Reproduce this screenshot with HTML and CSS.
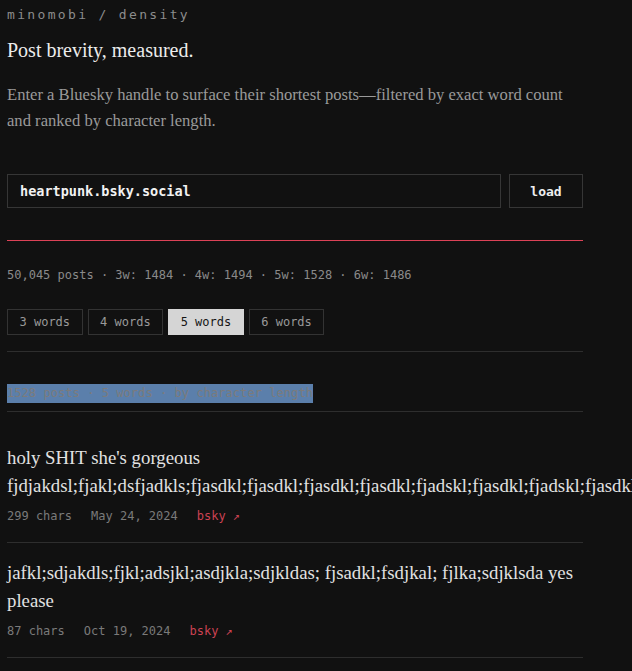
FILE: index.html
```html
<!DOCTYPE html>
<html>
<head>
<title>density</title>
<link rel="stylesheet" href="styles.css">
</head>
<body>

<div class="wrap">
  <div class="brand">minomobi / density</div>
  <h1 class="title">Post brevity, measured.</h1>
  <p class="lede">Enter a Bluesky handle to surface their shortest posts—filtered by exact word count and ranked by character length.</p>

  <form class="lookup" onsubmit="return false">
    <input class="handle" type="text" value="heartpunk.bsky.social">
    <button class="load" type="submit">load</button>
  </form>

  <div class="progress"><div class="progress-fill" style="width: 100%"></div></div>

  <div class="stats">50,045 posts · 3w: 1484 · 4w: 1494 · 5w: 1528 · 6w: 1486</div>

  <div class="tabs">
    <button class="tab">3 words</button>
    <button class="tab">4 words</button>
    <button class="tab active">5 words</button>
    <button class="tab">6 words</button>
  </div>

  <div class="summary"><span class="sel">1528 posts · 5 words · by character length</span></div>

  <div class="posts">
    <div class="post">
      <div class="post-text">holy SHIT she's gorgeous fjdjakdsl;fjakl;dsfjadkls;fjasdkl;fjasdkl;fjasdkl;fjasdkl;fjadskl;fjasdkl;fjadskl;fjasdkl;fjadskl;fjasdkl;fjasdkl;fjadskl;fjasdkl;fjadskl;fjasdkl;fjasdkl;fjadskl;fjasdkl;fjadskl;fjasdkl;fjasdkl;fjadskl;fjasdkl;fjadskl;fjasdkl;fjasdkl;fjadskl;fjasdkl;fjadskl;fjasdkl;fjasdkl</div>
      <div class="meta">
        <span>299 chars</span>
        <span>May 24, 2024</span>
        <a class="ext" href="#">bsky ↗</a>
      </div>
    </div>
    <div class="post">
      <div class="post-text">jafkl;sdjakdls;fjkl;adsjkl;asdjkla;sdjkldas; fjsadkl;fsdjkal; fjlka;sdjklsda yes please</div>
      <div class="meta">
        <span>87 chars</span>
        <span>Oct 19, 2024</span>
        <a class="ext" href="#">bsky ↗</a>
      </div>
    </div>
  </div>
</div>

</body>
</html>
```

FILE: styles.css
```css
html, body {
  overflow-x: hidden;
}

body {
  margin: 0;
  background-color: #111111;
  color: #e6e6e6;
  font-family: "Liberation Serif", serif;
}

.wrap {
  width: 576px;
  padding: 6px 7px 0;
}

.brand {
  font-family: "DejaVu Sans Mono", monospace;
  font-size: 13px;
  line-height: 18px;
  letter-spacing: 0.18em;
  color: #8c8c8c;
}

.title {
  margin: 12px 0 0;
  font-size: 20px;
  line-height: 28px;
  font-weight: normal;
  color: #ececec;
}

.lede {
  margin: 18px 0 0;
  font-size: 16.6px;
  line-height: 26px;
  color: #9a9a9a;
}

.lookup {
  display: flex;
  gap: 8px;
  margin-top: 40px;
}

.handle {
  flex-grow: 1;
  height: 34px;
  box-sizing: border-box;
  padding: 0 12px;
  background: #111111;
  border: 1px solid #363636;
  color: #f2f2f2;
  font-family: "DejaVu Sans Mono", monospace;
  font-size: 13.5px;
  font-weight: bold;
  outline: none;
}

.load {
  width: 74px;
  height: 34px;
  background: #111111;
  border: 1px solid #363636;
  color: #eeeeee;
  font-family: "DejaVu Sans Mono", monospace;
  font-size: 13px;
  font-weight: bold;
  cursor: pointer;
}

.progress {
  margin-top: 32px;
  height: 1px;
  background: #262626;
}

.progress-fill {
  height: 1px;
  background: #dc4257;
}

.stats {
  margin-top: 25px;
  font-family: "DejaVu Sans Mono", monospace;
  font-size: 12px;
  line-height: 18px;
  color: #8a8a8a;
}

.tabs {
  display: flex;
  gap: 5px;
  margin-top: 25px;
  padding-bottom: 16px;
  border-bottom: 1px solid #2e2e2e;
}

.tab {
  height: 26px;
  padding: 0 11.5px;
  background: #111111;
  border: 1px solid #333333;
  color: #999999;
  font-family: "DejaVu Sans Mono", monospace;
  font-size: 12px;
  cursor: pointer;
}

.tab.active {
  background: #d5d5d5;
  border-color: #d5d5d5;
  color: #151515;
}

.summary {
  padding: 32px 0 8px;
  border-bottom: 1px solid #2e2e2e;
  font-family: "DejaVu Sans Mono", monospace;
  font-size: 12px;
  line-height: 19px;
  height: 19px;
}

.sel {
  display: inline-block;
  background: #5b7fab;
  color: #7b7b7b;
  letter-spacing: 0.06px;
}

.posts {
  margin-top: 16px;
}

.post {
  padding: 16px 0 17px;
  border-bottom: 1px solid #2e2e2e;
}

.post-text {
  font-size: 18.8px;
  line-height: 28px;
  color: #e2e2e2;
}

.meta {
  display: flex;
  gap: 19px;
  margin-top: 7px;
  font-family: "DejaVu Sans Mono", monospace;
  font-size: 12px;
  line-height: 18px;
  color: #7a7a7a;
}

.ext {
  color: #cc4253;
  text-decoration: none;
}
```
